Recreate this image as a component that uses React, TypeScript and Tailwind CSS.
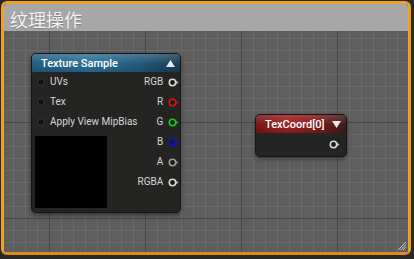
const inputs = ['UVs', 'Tex', 'Apply View MipBias'];
const outputs = [
  { label: 'RGB', color: '#d8d8d8' },
  { label: 'R', color: '#e01010' },
  { label: 'G', color: '#10d010' },
  { label: 'B', color: '#1010d8' },
  { label: 'A', color: '#9a9a9a' },
  { label: 'RGBA', color: '#d8d8d8' },
];

function OutPin({ color }: { color: string }) {
  return (
    <svg width="11" height="9" viewBox="0 0 11 9" className="shrink-0">
      <circle cx="4.5" cy="4.5" r="3.2" fill="#1a1a1a" stroke={color} strokeWidth="1.6" />
      <polygon points="8.3,2.8 10.3,4.5 8.3,6.2" fill={color} />
    </svg>
  );
}

function InPin() {
  return (
    <svg width="8" height="8" viewBox="0 0 8 8" className="shrink-0">
      <circle cx="4" cy="4" r="3.3" fill="#0e0e0e" stroke="#3a3a3a" strokeWidth="1" />
    </svg>
  );
}

export default function App() {
  return (
    <div className="w-[414px] h-[259px] bg-[#282828] pl-px pt-px font-['Roboto',sans-serif]">
      <div className="w-[410px] h-[254px] rounded-[6px] border-[3px] border-[#eba122] border-b-[#de8a1c] flex flex-col overflow-hidden">
        <div className="h-[27px] shrink-0 bg-[#a7a7a7] pl-[6px] pt-[3px] flex items-center">
          <span className="text-[18px] leading-none text-[#f3f3f3] [text-shadow:0_1px_1px_rgba(0,0,0,0.25)] font-['Noto_Sans_CJK_SC',sans-serif]">纹理操作</span>
        </div>
        <div className="relative flex-1 bg-[#5e5e5e] bg-[image:linear-gradient(to_right,#474747_1px,transparent_1px),linear-gradient(to_bottom,#474747_1px,transparent_1px),linear-gradient(to_right,#6a6a6a_1px,transparent_1px),linear-gradient(to_bottom,#6a6a6a_1px,transparent_1px)] bg-[size:96px_96px,96px_96px,12px_12px,12px_12px] bg-[position:45px_0,0_91px,9px_0,0_7px]">
          {/* Texture Sample node */}
          <div className="absolute left-[27px] top-[22px] w-[150px] h-[160px] rounded-[5px] border border-[#151515] bg-[#242523] shadow-[0_2px_4px_rgba(0,0,0,0.45)] overflow-hidden">
            <div className="relative h-[18px] flex items-center justify-between pl-[9px] pr-[5px] bg-[linear-gradient(to_right,#215f80,#2a7297_40%,#22587a_75%,#1b3f55)]">
              <div className="absolute inset-0 bg-[linear-gradient(to_bottom,rgba(255,255,255,0.18),rgba(255,255,255,0)_55%,rgba(0,0,0,0.15))]" />
              <span className="relative text-[11px] font-medium text-white leading-none">Texture Sample</span>
              <svg width="9" height="7" viewBox="0 0 9 7" className="relative">
                <polygon points="4.5,0 9,7 0,7" fill="#e8e8e8" />
              </svg>
            </div>
            <div className="flex justify-between">
              <div className="flex flex-col shrink-0">
                {inputs.map((label) => (
                  <div key={label} className="h-[20px] flex items-center gap-[5px] pl-[5px]">
                    <InPin />
                    <span className="text-[10px] text-[#d6d6d6] leading-none whitespace-nowrap">{label}</span>
                  </div>
                ))}
                <div className="mt-[4px] ml-[3px] w-[72px] h-[72px] bg-black" />
              </div>
              <div className="flex flex-col items-end pr-[6px]">
                {outputs.map((o) => (
                  <div key={o.label} className="h-[20px] flex items-center gap-[5px]">
                    <span className="text-[10px] text-[#d6d6d6] leading-none">{o.label}</span>
                    <OutPin color={o.color} />
                  </div>
                ))}
              </div>
            </div>
          </div>

          {/* TexCoord node */}
          <div className="absolute left-[251px] top-[83px] w-[92px] h-[43px] rounded-[5px] border border-[#151515] bg-[#242523] shadow-[0_2px_4px_rgba(0,0,0,0.45)] overflow-hidden">
            <div className="relative h-[18px] flex items-center justify-between pl-[9px] pr-[5px] bg-[linear-gradient(to_right,#7a1717,#a02020_35%,#7c1b1b_70%,#3d1d1d)]">
              <div className="absolute inset-0 bg-[linear-gradient(to_bottom,rgba(255,255,255,0.15),rgba(255,255,255,0)_55%,rgba(0,0,0,0.15))]" />
              <span className="relative text-[11px] font-medium text-white leading-none">TexCoord[0]</span>
              <svg width="9" height="7" viewBox="0 0 9 7" className="relative">
                <polygon points="0,0 9,0 4.5,7" fill="#e8e8e8" />
              </svg>
            </div>
            <div className="h-[23px] flex items-center justify-end pr-[6px]">
              <OutPin color="#d8d8d8" />
            </div>
          </div>

          {/* resize grip */}
          <svg width="10" height="10" viewBox="0 0 10 10" className="absolute right-[1px] bottom-[1px]">
            <path d="M9 1 L1 9 M9 3.5 L3.5 9 M9 6 L6 9" stroke="#c8c8c8" strokeWidth="1" />
          </svg>
        </div>
      </div>
    </div>
  );
}
